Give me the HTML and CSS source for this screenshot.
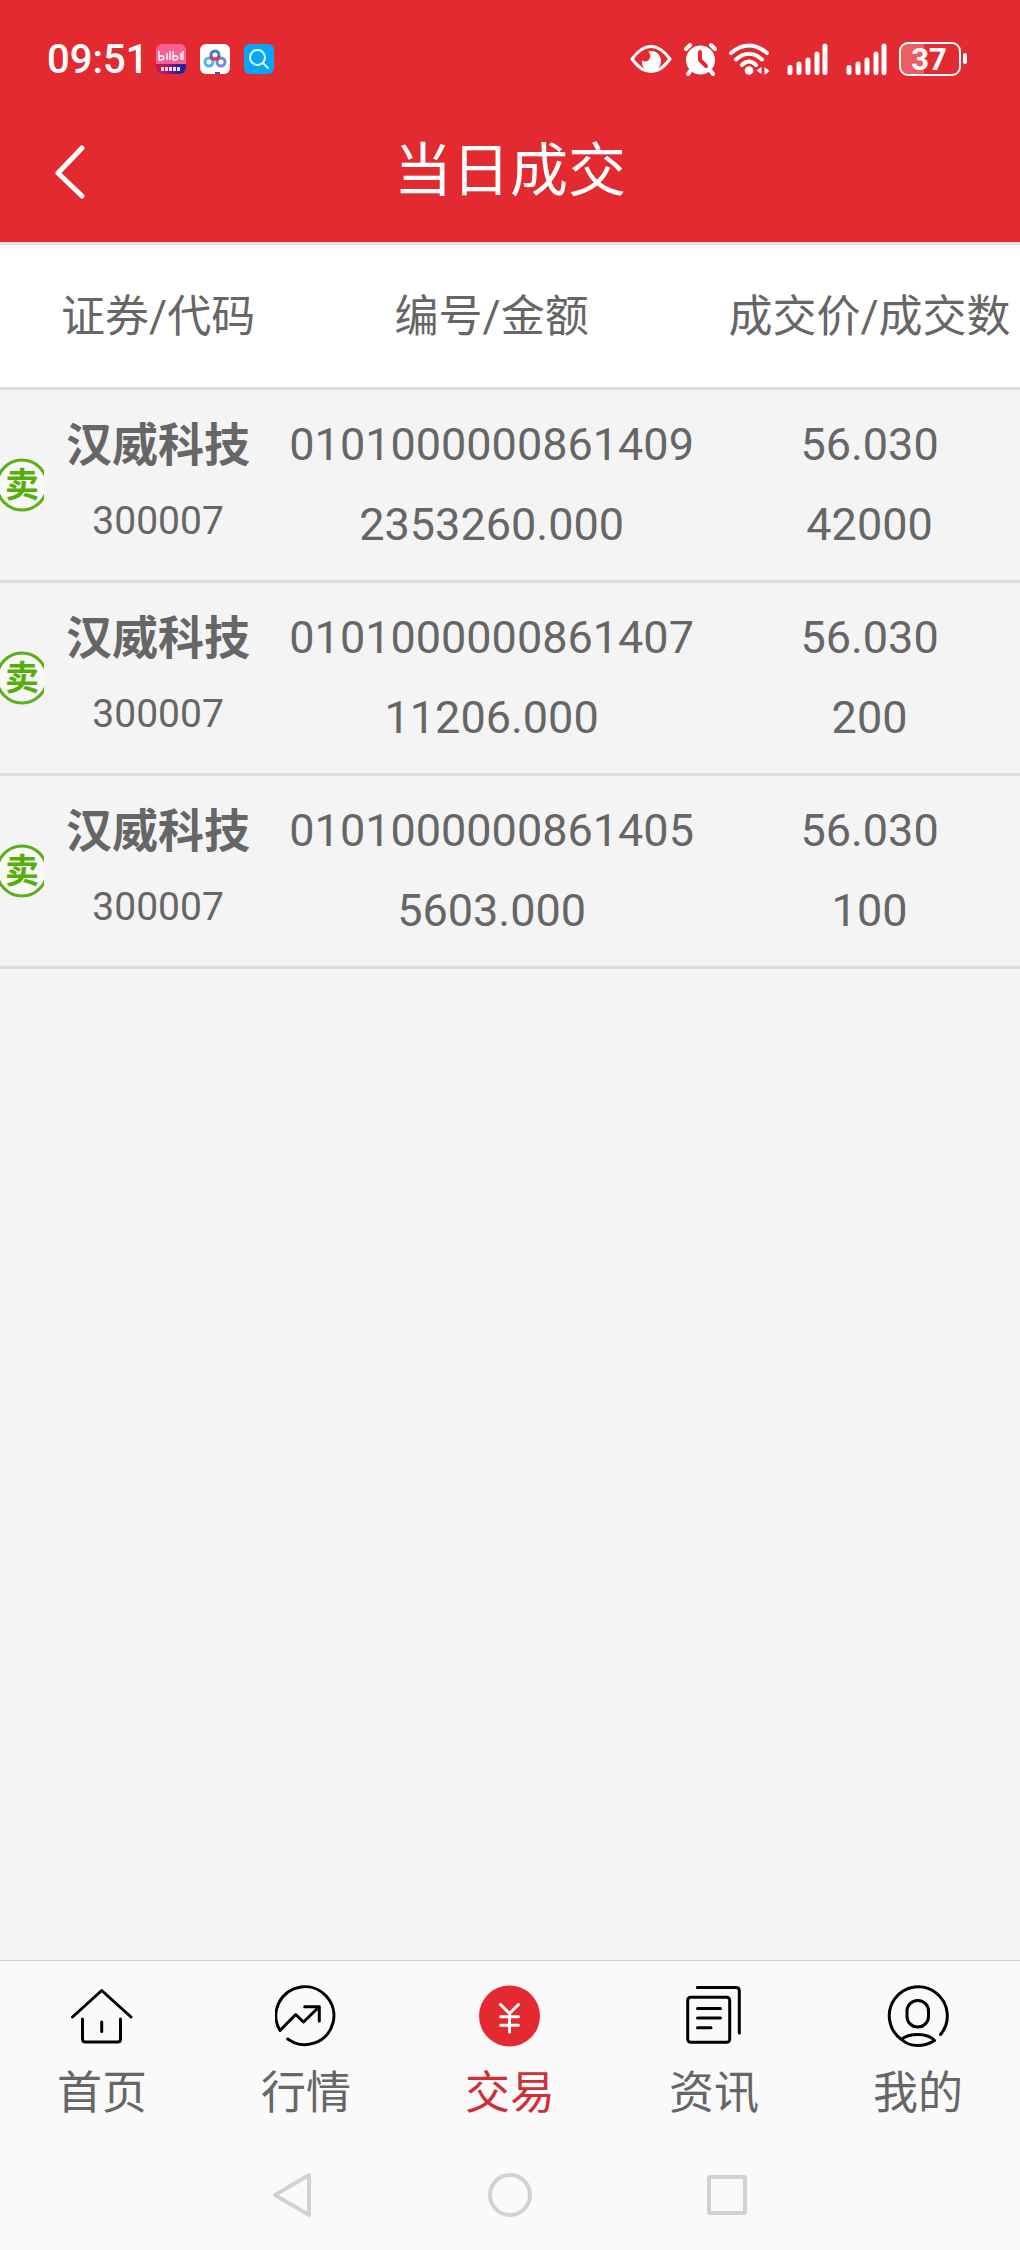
FILE: index.html
```
<!DOCTYPE html>
<html lang="zh-CN">
<head>
    <meta charset="UTF-8">
    <meta name="viewport" content="width=device-width">
    <title>当日成交</title>
    <link rel="stylesheet" href="styles.css">
</head>
<body>
<div class="statusBar">
    <span class="time">09:51</span>
    <div class="apps">
        <svg width="30" height="30" viewBox="0 0 30 30">
            <defs>
                <linearGradient id="strip"><stop offset="0.3" stop-color="#c2184f"/><stop offset="0.7" stop-color="#2a1fa8"/></linearGradient>
                <clipPath id="appShape"><rect width="30" height="30" rx="6"/></clipPath>
            </defs>
            <g clip-path="url(#appShape)">
                <rect width="30" height="30" fill="#fb6094"/>
                <rect y="20" width="30" height="10" fill="url(#strip)"/>
            </g>
            <path d="M3 7v9M11 9v7M14 7v9M17 7v9M25 9v7M27 7v9" stroke="#fff" stroke-width="1.5"/>
            <path d="M3 12h3c3 0 2 4-1 4H3M17 12h3c3 0 2 4-1 4h-2" fill="none" stroke="#fff" stroke-width="1.5"/>
            <path d="M5 25h20" stroke="#f3dcec" stroke-width="4" stroke-dasharray="3 1"/>
        </svg>
        <svg width="30" height="30" viewBox="0 0 30 30">
            <rect width="30" height="30" rx="6" fill="#fff"/>
            <g fill="none" stroke-width="3">
                <circle cx="9" cy="18" r="4" stroke="#4cb8e0"/>
                <circle cx="21" cy="18" r="4" stroke="#6c8bd8"/>
                <circle cx="15" cy="11" r="4" stroke="#3f7fc9"/>
                <path d="M11 12c0 4 8 4 8 0" stroke="#e0356b"/>
            </g>
            <path d="M15 28h5v2h-5z" fill="#2d62b8"/>
        </svg>
        <svg width="30" height="30" viewBox="0 0 30 30">
            <rect width="30" height="30" rx="6" fill="#05a7fb"/>
            <circle cx="13.500" cy="13.500" r="7.500" fill="none" stroke="#e4fbff" stroke-width="2"/>
            <path d="M19 19l5 5" stroke="#e4fbff" stroke-width="2" stroke-linecap="round"/>
        </svg>
    </div>
    <div class="signals">
        <svg width="42" height="34" viewBox="0 0 42 34">
            <path d="M2 17Q11 4.500 21 4.500T40 17Q31 29.500 21 29.500T2 17Z" fill="none" stroke="#fff" stroke-width="3" stroke-linejoin="round"/>
            <path d="M18 10C24 7 31 12 31 19C31 25 26 29 21 29C16 29 11 25 12 18C15 21 19 19 20 16C21 13 20 11 18 10Z" fill="#fff"/>
        </svg>
        <svg width="33" height="34" viewBox="0 0 33 34">
            <circle cx="16.500" cy="18" r="14.500" fill="#fff"/>
            <path d="M2 7l4-4M31 7l-4-4M7 28l-3 4M26 28l3 4" stroke="#fff" stroke-width="4" stroke-linecap="round"/>
            <path d="M16 10v8l6 6" fill="none" stroke="#e32a31" stroke-width="4" stroke-linecap="round" stroke-linejoin="round"/>
        </svg>
        <svg width="40" height="34" viewBox="0 0 40 34">
            <path d="M2 11Q20-4 38 11M7 17.500Q20 6 33 17.500M13 23Q20 16 27 23" fill="none" stroke="#fff" stroke-width="4" stroke-linecap="round"/>
            <circle cx="20" cy="28.500" r="4.300" fill="#fff"/>
            <path d="M32.500 25v7l-5-3.500zM35.500 25v8l5-4z" fill="#fff"/>
        </svg>
        <svg class="signal" width="41" height="34" viewBox="0 0 41 34">
            <path d="M3 25.500v5M12 22v8.500M21 18v12.500M30 12v18.500M38 4v26.500" stroke="#fff" stroke-width="5" stroke-linecap="round"/>
        </svg>
        <svg class="signal" width="41" height="34" viewBox="0 0 41 34">
            <path d="M3 25.500v5M12 22v8.500M21 18v12.500M30 12v18.500M38 4v26.500" stroke="#fff" stroke-width="5" stroke-linecap="round"/>
        </svg>
        <svg class="battery" width="68" height="34" viewBox="0 0 68 34">
            <path d="M25 2v30H9a7 7 0 0 1-7-7V9a7 7 0 0 1 7-7z" fill="#fff" opacity="0.250"/>
            <rect x="1" y="1" width="60" height="32" rx="8" fill="none" stroke="#fff" stroke-width="2"/>
            <path d="M66 13v7" stroke="#fff" stroke-width="4" stroke-linecap="round"/>
            <text x="30" y="28">37</text>
        </svg>
    </div>
</div>
<header class="titleBar">
    <button class="back" type="button" aria-label="返回">
        <svg width="32" height="56" viewBox="0 0 32 56"><path d="M28 5L4 30l24 23" fill="none" stroke="#fff" stroke-width="5" stroke-linecap="round" stroke-linejoin="round"/></svg>
    </button>
    <h1>当日成交</h1>
</header>
<main class="content">
    <table class="deals">
        <colgroup>
            <col class="colSide">
            <col class="colStock">
            <col class="colOrder">
            <col>
        </colgroup>
        <thead>
            <tr>
                <td></td>
                <th>证券/代码</th>
                <th>编号/金额</th>
                <th>成交价/成交数</th>
            </tr>
        </thead>
        <tbody>
            <tr>
                <td class="side"><svg width="44" height="54" viewBox="0 0 44 54"><circle cx="22" cy="27" r="25"/><text x="22" y="39">卖</text></svg></td>
                <td><div class="name">汉威科技</div><div class="code">300007</div></td>
                <td><div>0101000000861409</div><div>2353260.000</div></td>
                <td><div>56.030</div><div>42000</div></td>
            </tr>
            <tr>
                <td class="side"><svg width="44" height="54" viewBox="0 0 44 54"><circle cx="22" cy="27" r="25"/><text x="22" y="39">卖</text></svg></td>
                <td><div class="name">汉威科技</div><div class="code">300007</div></td>
                <td><div>0101000000861407</div><div>11206.000</div></td>
                <td><div>56.030</div><div>200</div></td>
            </tr>
            <tr>
                <td class="side"><svg width="44" height="54" viewBox="0 0 44 54"><circle cx="22" cy="27" r="25"/><text x="22" y="39">卖</text></svg></td>
                <td><div class="name">汉威科技</div><div class="code">300007</div></td>
                <td><div>0101000000861405</div><div>5603.000</div></td>
                <td><div>56.030</div><div>100</div></td>
            </tr>
        </tbody>
    </table>
</main>
<nav class="tabBar">
    <a class="tab" href="#">
        <svg width="62" height="62" viewBox="0 0 62 62"><path d="M1.500 32L30.700 5.500L60 32M11.500 34v20q0 3 3 3h32q3 0 3-3V34M30.700 37v9.500"/></svg>
        首页
    </a>
    <a class="tab" href="#">
        <svg width="62" height="62" viewBox="0 0 62 62"><path d="M12.700 54A29 29 0 1 0 5 45.500L20.700 29.500L28.500 37L44 22M29.700 21.700H44.300V36"/></svg>
        行情
    </a>
    <a class="tab selectedTab" href="#">
        <svg width="62" height="62" viewBox="0 0 62 62"><circle cx="30.500" cy="31" r="30.500"/><path d="M21.500 19.500l9 9l9-9M30.500 28.500V47M21.500 31.700h18M21.500 40.300h18"/></svg>
        交易
    </a>
    <a class="tab" href="#">
        <svg width="62" height="62" viewBox="0 0 62 62"><rect x="4.700" y="12.300" width="42" height="45" rx="3"/><path d="M14.300 2.500H53q3.300 0 3.300 3.300V48M14.500 23.500h23M14.500 33h23M14.500 42.700h13.500"/></svg>
        资讯
    </a>
    <a class="tab" href="#">
        <svg width="62" height="62" viewBox="0 0 62 62"><path d="M53.500 49.500A29 29 0 1 0 14.500 54.500Q20 49.500 31 49.500T47.500 55.500Q40 60.500 30.500 60.500T14.500 54.500"/><rect x="20" y="15.500" width="21.500" height="26.500" rx="10.500"/></svg>
        我的
    </a>
</nav>
<div class="sysNav">
    <button type="button" aria-label="后退"><svg width="44" height="44" viewBox="0 0 44 44"><path d="M38 2L4 22l34 20z"/></svg></button>
    <button type="button" aria-label="主屏幕"><svg width="44" height="44" viewBox="0 0 44 44"><circle cx="22" cy="22" r="20"/></svg></button>
    <button type="button" aria-label="最近任务"><svg width="44" height="44" viewBox="0 0 44 44"><rect x="4" y="4" width="36" height="36" rx="1"/></svg></button>
</div>
</body>
</html>
```
FILE: styles.css
```
*{ padding: 0; margin: 0; box-sizing: border-box;}
body{ display: flex; flex-direction: column; min-height: 100vh; background: #f4f4f4; color: #666; font-family: Roboto, "Noto Sans CJK SC", sans-serif;}
svg{ display: block;}
button{ border: none; background: none; cursor: pointer;}

.statusBar{ display: flex; align-items: center; height: 100px; padding: 18px 53px 0 47px; background: #e32a31; color: #fff;}
.time{ padding-top: 2px; font-size: 40px; font-weight: 500; line-height: 48px;}
.apps{ display: flex; gap: 14px; margin-left: 8px;}
.signals{ display: flex; gap: 12px; margin-left: auto;}
.signal{ margin-left: 6px;}
.battery{ overflow: visible;}
.battery text{ fill: #fff; font-size: 31px; font-weight: bold; text-anchor: middle;}

.titleBar{ display: grid; grid-template-columns: 1fr auto 1fr; align-items: center; height: 145px; padding: 0 54px; background: #e32a31; border-bottom: 3px solid #e6dcdd; color: #fff;}
.back{ justify-self: start;}
.titleBar h1{ font-size: 58px; font-weight: normal; line-height: 80px;}

.content{ flex: 1;}
.deals{ width: 100%; table-layout: fixed; border-collapse: separate; border-spacing: 0; text-align: center; white-space: nowrap;}
.colSide{ width: 5.1%;}
.colStock{ width: 20.8%;}
.colOrder{ width: 44.6%;}
.deals thead{ background: #fff;}
.deals th{ height: 145px; padding-bottom: 6px; font-size: 44px; font-weight: normal;}
.deals th, .deals td{ border-bottom: 3px solid #dcdcdc;}
.deals tbody td{ padding: 15px 0; font-size: 45px; line-height: 80px; vertical-align: top;}
.deals .name{ font-size: 46px; font-weight: bold;}
.deals .code{ font-size: 39px; line-height: 72px;}
.deals tbody .side{ vertical-align: middle;}
.side circle{ fill: #f8f8f8; stroke: #5cb01c; stroke-width: 3px;}
.side text{ fill: #55ae0a; font-size: 34px; font-weight: bold; text-anchor: middle;}

.tabBar{ display: flex; background: #fafafa; border-top: 1px solid #d2d2d2;}
.tab{ flex: 1; display: flex; flex-direction: column; align-items: center; gap: 17px; padding: 24px 0 16px; color: #666; font-size: 45px; line-height: 60px; text-decoration: none;}
.tab svg{ fill: none; stroke: #000; stroke-width: 3px; stroke-linecap: round; stroke-linejoin: round;}
.selectedTab{ color: #cf3038;}
.tab.selectedTab svg{ stroke: #fff;}
.selectedTab circle{ fill: #e32a31; stroke: none;}

.sysNav{ display: flex; justify-content: center; align-items: center; gap: 173px; height: 110px; background: #fafafa;}
.sysNav svg{ fill: none; stroke: #d2d2d2; stroke-width: 4px; stroke-linejoin: round;}
```
